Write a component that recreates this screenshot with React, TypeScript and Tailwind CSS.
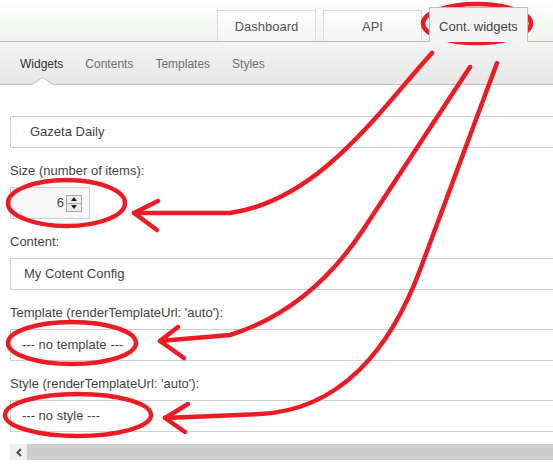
const tabs = ['Dashboard', 'API'];
const subnav = ['Widgets', 'Contents', 'Templates', 'Styles'];

function Label({ children }: { children: React.ReactNode }) {
  return (
    <div className="mt-[14px] mb-[7px] h-[18px] leading-[18px] text-[13px] text-[#444]">
      {children}
    </div>
  );
}

function Field({ children, pad }: { children: React.ReactNode; pad: string }) {
  return (
    <div className={`h-[32px] w-[580px] flex items-center border border-[#cfcfcf] bg-white text-[13px] text-[#444] ${pad}`}>
      {children}
    </div>
  );
}

// hand-drawn red marks on top of the screenshot
function Annotations() {
  const red = '#ed1c24';
  return (
    <svg
      className="absolute top-0 left-0 pointer-events-none"
      width="553"
      height="472"
      viewBox="0 0 553 472"
      fill="none"
      stroke={red}
      strokeWidth={4.5}
      strokeLinecap="round"
      strokeLinejoin="round"
    >
      <ellipse cx="477" cy="23.5" rx="54" ry="19.5" />
      <ellipse cx="66.5" cy="203" rx="58.5" ry="23" />
      <ellipse cx="72" cy="343" rx="64" ry="21" />
      <ellipse cx="78" cy="415" rx="73" ry="21" />

      <path d="M432 53 C 380 110, 320 200, 230 213 L 134 213" />
      <path d="M158 201 L 134 213 L 157 230" />

      <path d="M470 67 L 363 230 Q 310 310 230 335 L 160 341" />
      <path d="M178 327 L 160 341 L 184 358" />

      <path d="M497 63 L 420 270 C 390 350, 340 410, 260 414 L 165 418" />
      <path d="M188 404 L 165 418 L 185 432" />
    </svg>
  );
}

export default function App() {
  return (
    <div className="relative w-[553px] h-[472px] overflow-hidden bg-white font-['Liberation_Sans',Arial,sans-serif]">
      {/* main tabs */}
      <div className="h-[42px] flex items-end justify-end gap-[7px] pr-[25px] border-b border-[#bdbdbd] bg-linear-to-b from-white to-[#eef4ec]">
        {tabs.map((t) => (
          <div
            key={t}
            className="w-[99px] h-[31px] pt-[2px] flex items-center justify-center border border-b-0 border-[#dcdcdc] bg-linear-to-b from-white to-[#f4f4f4] text-[13px] text-[#555]"
          >
            {t}
          </div>
        ))}
        <div className="relative z-10 -mb-px w-[99px] h-[35px] pt-[4px] flex items-center justify-center border border-b-0 border-[#bdbdbd] bg-[#f4f4f4] text-[13px] text-[#444]">
          Cont. widgets
        </div>
      </div>

      {/* sub navigation */}
      <div className="relative h-[43px] flex items-center gap-[22px] pl-[20px] pt-[2px] border-b border-[#c4c4c4] bg-linear-to-b from-[#f4f4f4] to-[#e7e7e7] text-[12px]">
        {subnav.map((s, i) => (
          <span key={s} className={i === 0 ? 'text-[#333]' : 'text-[#6f6f6f]'}>
            {s}
          </span>
        ))}
        <svg className="absolute left-[32px] bottom-[-1px]" width="21" height="8" viewBox="0 0 21 8">
          <polygon points="0,8 10.5,0.5 21,8" fill="#fff" />
          <polyline points="0,7.5 10.5,0.5 21,7.5" fill="none" stroke="#c4c4c4" strokeWidth="1" />
        </svg>
      </div>

      {/* form */}
      <div className="pl-[10px] pt-[31px]">
        <Field pad="pl-[19px]">Gazeta Daily</Field>

        <Label>Size (number of items):</Label>
        <div className="w-[80px] h-[32px] flex items-center justify-end pr-[7px] border border-[#cfcfcf] bg-[#f7f7f7] text-[13px] text-[#444]">
          <span>6</span>
          <div className="ml-[2px] w-[16px] h-[17px] flex flex-col border border-[#a9a9a9] bg-[#ececec]">
            <div className="flex-1 flex items-center justify-center border-b border-[#a9a9a9]">
              <svg width="6" height="4" viewBox="0 0 6 4">
                <polygon points="0,4 3,0 6,4" fill="#222" />
              </svg>
            </div>
            <div className="flex-1 flex items-center justify-center">
              <svg width="6" height="4" viewBox="0 0 6 4">
                <polygon points="0,0 3,4 6,0" fill="#222" />
              </svg>
            </div>
          </div>
        </div>

        <Label>Content:</Label>
        <Field pad="pl-[13px]">My Cotent Config</Field>

        <Label>Template (renderTemplateUrl: 'auto'):</Label>
        <Field pad="pl-[11px]">--- no template ---</Field>

        <Label>Style (renderTemplateUrl: 'auto'):</Label>
        <Field pad="pl-[11px]">--- no style ---</Field>

        {/* horizontal scrollbar */}
        <div className="mt-[12px] h-[16px] flex">
          <div className="w-[17px] flex items-center justify-center bg-[#f0f0f0]">
            <svg width="6" height="9" viewBox="0 0 6 9">
              <polyline points="5,1 1.5,4.5 5,8" fill="none" stroke="#505050" strokeWidth="2" />
            </svg>
          </div>
          <div className="flex-1 bg-[#cdcdcd]" />
        </div>
      </div>

      <Annotations />
    </div>
  );
}
